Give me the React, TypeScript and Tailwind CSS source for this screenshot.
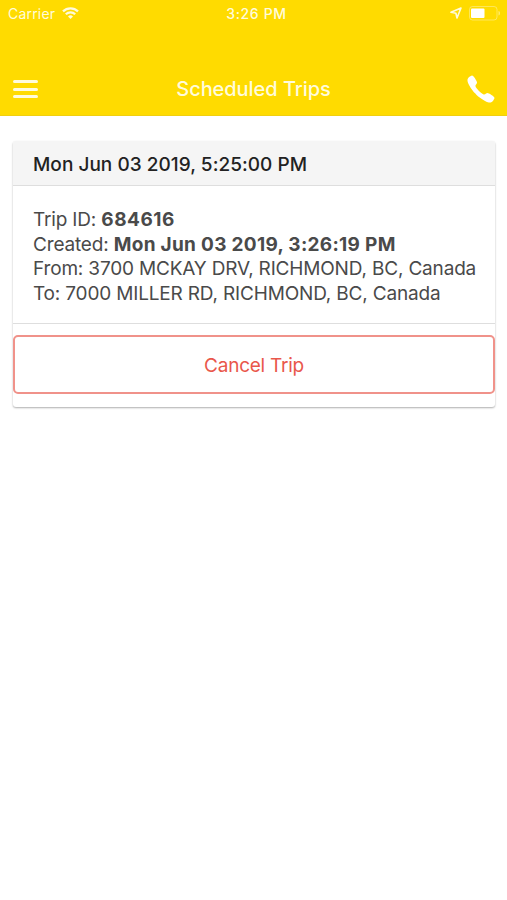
import { IoIosCall } from "react-icons/io";

const trip = {
  id: "684616",
  scheduled: "Mon Jun 03 2019, 5:25:00 PM",
  created: "Mon Jun 03 2019, 3:26:19 PM",
  from: "3700 MCKAY DRV, RICHMOND, BC, Canada",
  to: "7000 MILLER RD, RICHMOND, BC, Canada",
};

function WifiIcon() {
  return (
    <svg width="17" height="12" viewBox="0 0 17 12" fill="none" stroke="currentColor" strokeWidth="2.2">
      <path d="M1 4.4a10.6 10.6 0 0 1 15 0" />
      <path d="M3.8 7.3a6.6 6.6 0 0 1 9.4 0" />
      <path d="M8.5 12 6 9.5a3.5 3.5 0 0 1 5 0z" fill="currentColor" stroke="none" />
    </svg>
  );
}

function LocationIcon() {
  return (
    <svg width="12" height="12" viewBox="0 0 12 12" fill="none" stroke="currentColor" strokeWidth="1.6" strokeLinejoin="round">
      <path d="M11 1 7 11 5.9 6.2 1 5.3z" />
    </svg>
  );
}

function BatteryIcon() {
  return (
    <svg width="32" height="15" viewBox="0 0 32 15" fill="none">
      <rect x="0.5" y="0.5" width="27.5" height="13.5" rx="3" stroke="currentColor" strokeOpacity="0.4" />
      <rect x="2" y="2.5" width="13.5" height="9.5" rx="1" fill="white" />
      <path d="M29.5 5v4.5c1-.3 1.5-1.2 1.5-2.25S30.5 5.3 29.5 5z" fill="currentColor" fillOpacity="0.5" />
    </svg>
  );
}

function StatusBar() {
  return (
    <div className="grid h-[26px] grid-cols-3 items-center pr-[6px] pl-2 text-[14px] text-[#fffbdc]">
      <div className="flex items-center gap-[7px]">
        <span className="tracking-[0.2px]">Carrier</span>
        <WifiIcon />
      </div>
      <span className="pl-1 text-center font-medium tracking-[0.65px]">3:26 PM</span>
      <div className="flex items-center justify-end gap-[7px]">
        <LocationIcon />
        <BatteryIcon />
      </div>
    </div>
  );
}

export default function App() {
  return (
    <div className="min-h-screen bg-white font-['Inter',sans-serif] whitespace-nowrap">
      <header className="h-[116px] border-b border-[#f0cf10] bg-[#ffdb00]">
        <StatusBar />
        <div className="mt-[36px] grid h-[54px] grid-cols-[60px_1fr_60px] items-center">
          <button className="ml-[13px] flex w-[25px] flex-col gap-[4.5px]" aria-label="Menu">
            <span className="h-[3px] rounded-full bg-[#fffbdc]" />
            <span className="h-[3px] rounded-full bg-[#fffbdc]" />
            <span className="h-[3px] rounded-full bg-[#fffbdc]" />
          </button>
          <h1 className="text-center text-[20px] font-medium tracking-[-0.05px] text-[#fffbdc]">Scheduled Trips</h1>
          <button className="ml-[16px] text-white" aria-label="Call">
            <IoIosCall size={36} />
          </button>
        </div>
      </header>

      <main className="pt-[25px] pr-3 pl-[13px]">
        <section className="h-[266px] rounded-[3px] bg-white shadow-[0_1px_2px_rgba(0,0,0,0.32)]">
          <h2 className="flex h-[45px] items-center rounded-t-[3px] border-b border-[#dedede] bg-[#f5f5f5] px-5 pt-[4px] text-[19px] font-[450] tracking-[0.03px] text-[#222]">
            {trip.scheduled}
          </h2>
          <div className="h-[138px] border-b border-[#dedede] px-5 pt-[22px] text-[19px] leading-[24.5px] tracking-[-0.17px] text-[#4a4a4a]">
            <p>
              Trip ID: <b className="tracking-[0.5px]">{trip.id}</b>
            </p>
            <p>
              Created: <b className="tracking-[0.3px]">{trip.created}</b>
            </p>
            <p>From: {trip.from}</p>
            <p>To: {trip.to}</p>
          </div>
          <button className="mt-[11px] h-[59px] w-full rounded-[5px] border-2 border-solid border-[#f0928a] pt-[3px] text-[19px] tracking-[-0.25px] text-[#e9574b] outline-none">
            Cancel Trip
          </button>
        </section>
      </main>
    </div>
  );
}
